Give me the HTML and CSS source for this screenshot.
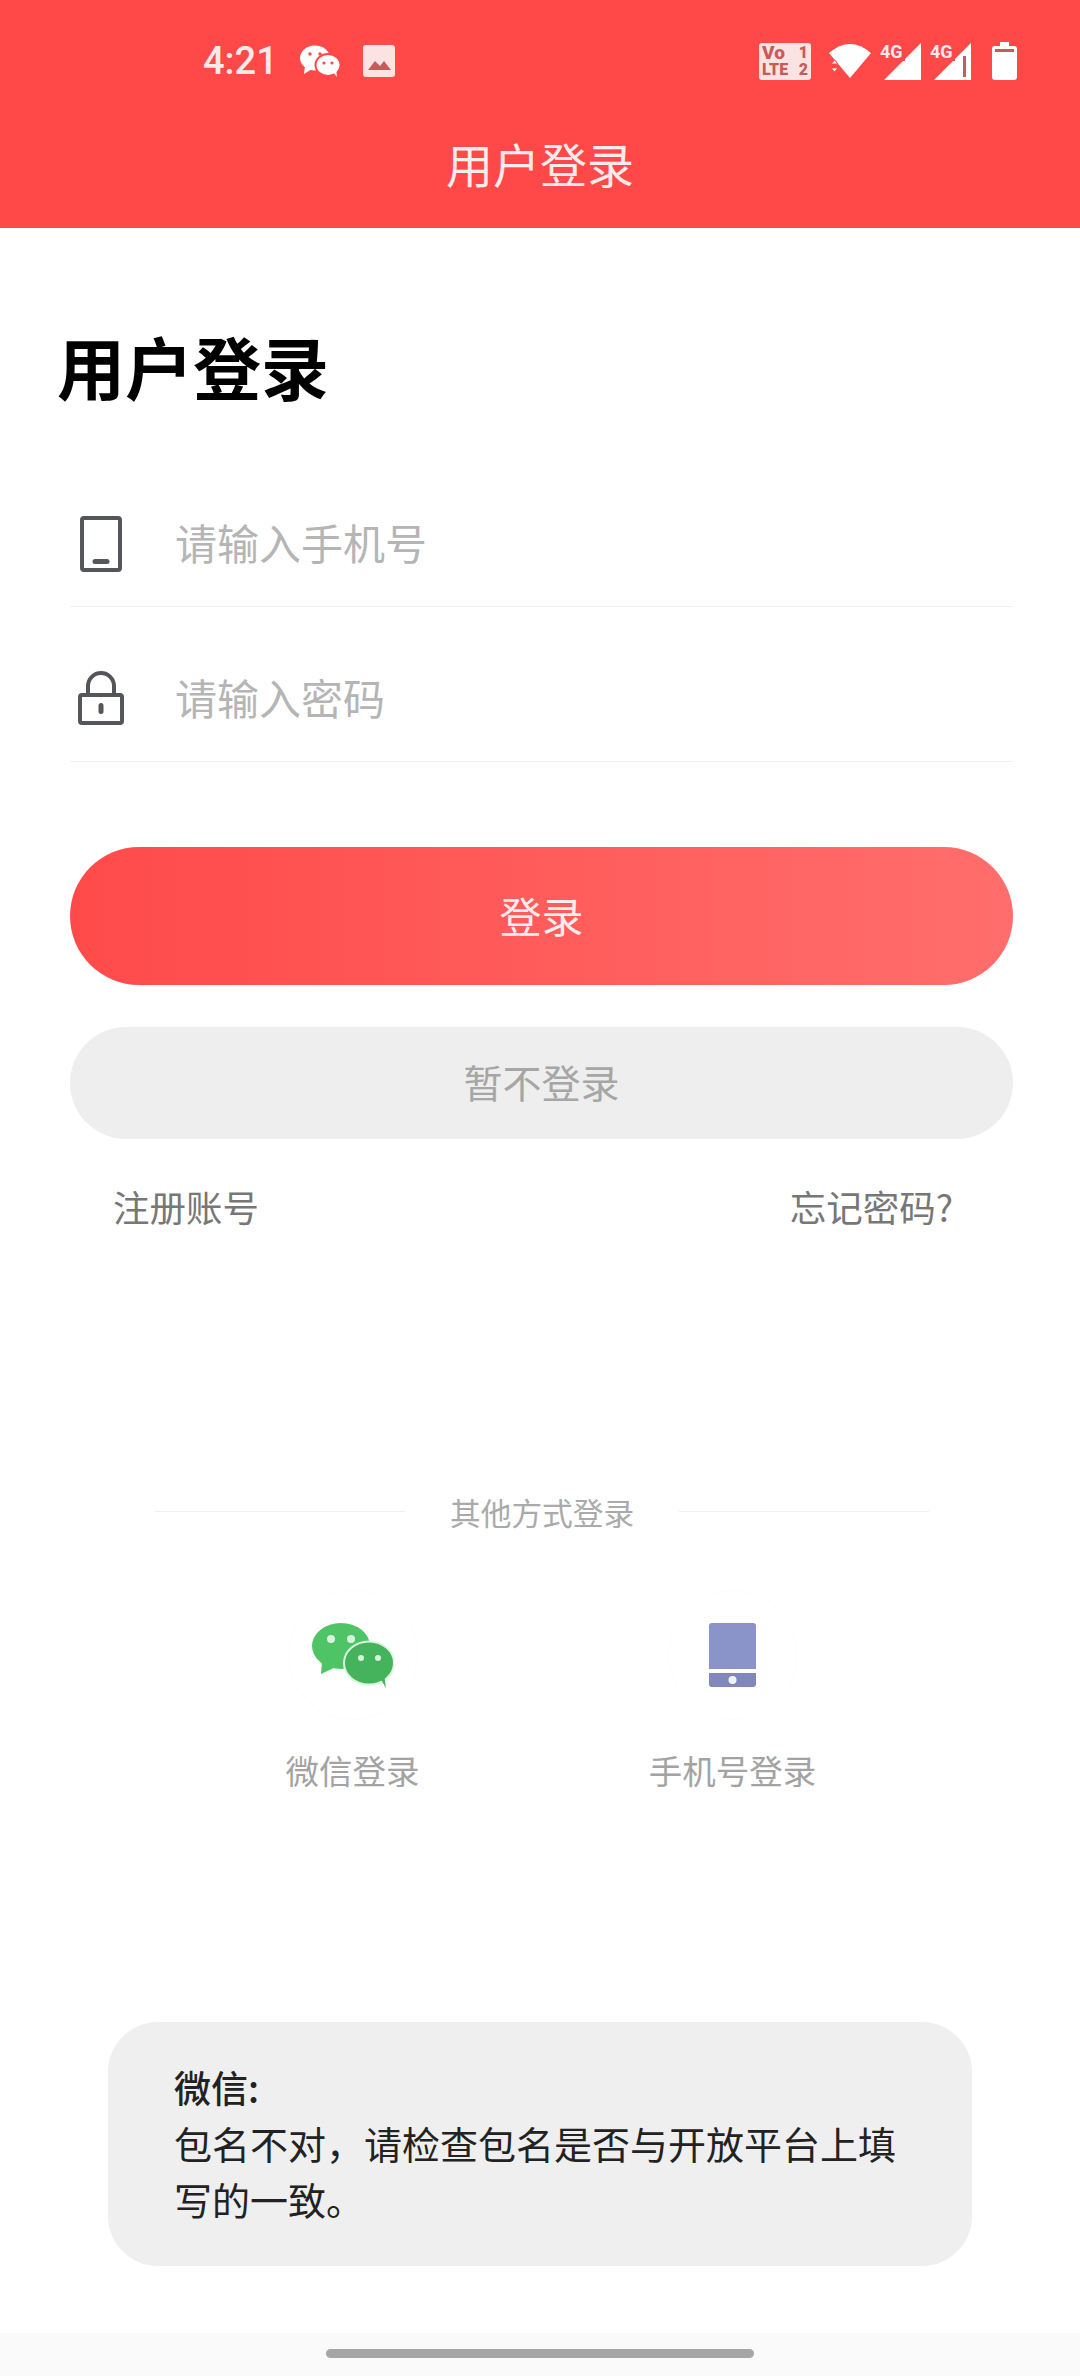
FILE: index.html
```html
<!DOCTYPE html>
<html lang="zh-CN">
<head>
<meta charset="utf-8">
<title>用户登录</title>
<link rel="stylesheet" href="styles.css">
</head>
<body>
<div class="screen">
  <header class="header">
    <div class="status">
      <div class="status-left">
        <span class="time">4:21</span>
        <svg class="ic-wechat" viewBox="0 0 40 32"><ellipse cx="15" cy="13" rx="15" ry="12.5" fill="#fff"/><path d="M5 21l-1 8 8-5z" fill="#fff"/><circle cx="10" cy="9" r="1.7" fill="#ff4848"/><circle cx="20" cy="9" r="1.7" fill="#ff4848"/><ellipse cx="28" cy="20" rx="12.5" ry="11" fill="#fff" stroke="#ff4848" stroke-width="2"/><path d="M33 27l4 5-1-8z" fill="#fff"/><circle cx="24" cy="18" r="1.6" fill="#ff4848"/><circle cx="32" cy="18" r="1.6" fill="#ff4848"/></svg>
        <svg class="ic-image" viewBox="0 0 32 32"><rect width="32" height="32" rx="3" fill="#fbe3e3"/><path d="M5 25l7-9 5 5 4-5 7 9z" fill="#c85a5a"/></svg>
      </div>
      <div class="status-right">
        <div class="volte">
          <span class="volte-vo">Vo</span><span class="volte-num">1</span>
          <span class="volte-lte">LTE</span><span class="volte-num">2</span>
        </div>
        <svg class="ic-wifi" viewBox="0 0 42 34"><path d="M0 9Q21-9 42 9L21 34z" fill="#fff"/><path d="M2 20l3.500-4 3.500 4zM2 24h7l-3.500 4z" fill="#fff" stroke="#ff4848" stroke-width="1"/></svg>
        <div class="sig">
          <svg class="sig-tri" viewBox="0 0 40 37"><path d="M39 0v37H2z" fill="#fff"/></svg>
          <span class="sig-label">4G</span>
        </div>
        <div class="sig sig-second">
          <svg class="sig-tri" viewBox="0 0 40 37"><path d="M39 0v37H2z" fill="#fff"/><path d="M31 13h3v21h-3z" fill="#c85a5a"/></svg>
          <span class="sig-label">4G</span>
        </div>
        <svg class="ic-batt" viewBox="0 0 25 38"><path d="M8 0h9v4h5a3 3 0 0 1 3 3v28a3 3 0 0 1-3 3H3a3 3 0 0 1-3-3V7a3 3 0 0 1 3-3h5z" fill="#fff"/><rect x="3" y="7" width="19" height="3" fill="#c85a5a"/></svg>
      </div>
    </div>
    <h1 class="nav-title">用户登录</h1>
  </header>

  <main class="main">
    <h2 class="page-title">用户登录</h2>
    <div class="field">
      <svg class="field-icon" viewBox="0 0 46 56"><rect x="4" y="2" width="38" height="52" rx="2" fill="none" stroke="#55565a" stroke-width="4"/><rect x="14.500" y="43" width="17" height="5" rx="2.500" fill="#55565a"/></svg>
      <span class="placeholder">请输入手机号</span>
    </div>
    <div class="field">
      <svg class="field-icon" viewBox="0 0 46 56"><path d="M10 24V15a13 13 0 0 1 26 0v9" fill="none" stroke="#55565a" stroke-width="4"/><rect x="2" y="24" width="42" height="28" rx="2" fill="none" stroke="#55565a" stroke-width="4"/><rect x="20.500" y="32" width="5" height="11" rx="2.500" fill="#55565a"/></svg>
      <span class="placeholder">请输入密码</span>
    </div>
    <div class="btn btn-primary">登录</div>
    <div class="btn btn-secondary">暂不登录</div>
    <div class="links">
      <span>注册账号</span>
      <span>忘记密码?</span>
    </div>

    <div class="other">
      <span class="other-line"></span>
      <span class="other-text">其他方式登录</span>
      <span class="other-line"></span>
    </div>

    <div class="social">
      <div class="social-item">
        <div class="social-circle">
          <svg class="ic-wx" viewBox="0 0 82 65">
            <ellipse cx="29" cy="23" rx="29" ry="23" fill="#4fc466"/>
            <path d="M10 38l-1 13 15-7z" fill="#4fc466"/>
            <circle cx="19" cy="16" r="4" fill="#d8f3dd"/><circle cx="39" cy="16" r="4" fill="#d8f3dd"/>
            <ellipse cx="57" cy="40" rx="25" ry="21.500" fill="#45b35c" stroke="#d9f7df" stroke-width="2"/>
            <path d="M68 55l6 10-2-14z" fill="#45b35c"/>
            <circle cx="49" cy="35" r="3" fill="#d8f3dd"/><circle cx="66" cy="35" r="3" fill="#d8f3dd"/>
          </svg>
        </div>
        <span class="social-label">微信登录</span>
      </div>
      <div class="social-item">
        <div class="social-circle">
          <svg class="ic-ph" viewBox="0 0 47 64">
            <path d="M3 0h41a3 3 0 0 1 3 3v43H0V3a3 3 0 0 1 3-3z" fill="#8a94c8"/>
            <path d="M0 50h47v11a3 3 0 0 1-3 3H3a3 3 0 0 1-3-3z" fill="#7f87bb"/>
            <circle cx="23.500" cy="57" r="4" fill="#f2f3fa"/>
          </svg>
        </div>
        <span class="social-label">手机号登录</span>
      </div>
    </div>
  </main>

  <div class="toast">
    <div class="toast-title">微信:</div>
    <div class="toast-body">包名不对&#xFF0C;请检查包名是否与开放平台上填写的一致。</div>
  </div>

  <footer class="gesture"><span class="gesture-bar"></span></footer>
</div>
</body>
</html>
```
FILE: styles.css
```css
* { box-sizing: border-box; }
html, body { margin: 0; padding: 0; background: #fff; }
body { font-family: "Noto Sans CJK SC", "Noto Sans", sans-serif; }
.screen { position: relative; width: 1080px; height: 2376px; display: flex; flex-direction: column; overflow: hidden; background: #fff; }

.header { height: 228px; background: #ff4848; color: #fff; flex: none; }
.status { height: 122px; display: flex; align-items: center; justify-content: space-between; padding: 0 63px 0 203px; }
.status-left, .status-right { display: flex; align-items: center; }
.time { font-family: Roboto, sans-serif; font-weight: 500; font-size: 38px; line-height: 40px; color: #fde9e9; width: 97px; }
.ic-wechat { width: 40px; height: 32px; }
.ic-image { width: 32px; height: 32px; margin-left: 23px; }

.volte { width: 52px; height: 37px; padding: 1px 3px; border-radius: 3px; background: #fbe3e3; color: #c85a5a; font-family: Roboto, sans-serif; font-weight: 900; display: grid; grid-template-columns: 1fr auto; align-items: center; line-height: 17px; }
.volte-vo { font-size: 19px; }
.volte-lte { font-size: 16px; }
.volte-num { font-size: 16px; }

.ic-wifi { width: 42px; height: 34px; margin-left: 18px; }
.sig { position: relative; width: 40px; height: 37px; margin-left: 11px; }
.sig-second { margin-left: 10px; }
.sig-tri { display: block; width: 40px; height: 37px; }
.sig-label { position: absolute; left: -2px; top: -1px; padding-right: 2px; background: #ff4848; color: #fde9e9; font-family: Roboto, sans-serif; font-weight: 700; font-size: 18px; line-height: 19px; }
.ic-batt { width: 25px; height: 38px; margin-left: 20px; }

.nav-title { margin: 11px 0 0; font-weight: 400; font-size: 47px; line-height: 60px; text-align: center; color: #fdeaea; }

.main { padding: 0 67px 0 70px; flex: none; }
.page-title { margin: 93px 0 0 -13px; font-weight: 700; font-size: 68px; line-height: 90px; color: #000; }
.field { display: flex; align-items: center; height: 155px; padding: 57px 0 27px; border-bottom: 1px solid #f0f0f0; }
.page-title + .field { margin-top: 41px; }
.field-icon { width: 46px; height: 56px; margin-left: 8px; flex: none; }
.placeholder { margin: 0 0 4px 51px; font-size: 42px; line-height: 60px; color: #b5b5b5; }

.btn { display: flex; align-items: center; justify-content: center; padding-bottom: 4px; }
.btn-primary { height: 138px; margin-top: 85px; border-radius: 70px; background: linear-gradient(90deg, #ff4a4a, #ff6e6c); color: #fdecec; font-size: 42px; }
.btn-secondary { height: 112px; margin-top: 42px; background: #eeeeee; color: #a6a6a6; font-size: 39px; border-radius: 56px; }
.links { display: flex; justify-content: space-between; margin-top: 43px; padding: 0 60px 0 43px; font-size: 36.500px; line-height: 50px; color: #777; }

.other { display: flex; align-items: center; gap: 45px; margin: 260px 0 0 85px; }
.other-line { width: 250px; height: 1px; background: #efefef; margin-top: -2px; }
.other-text { font-size: 30.700px; line-height: 40px; color: #aaaaaa; white-space: nowrap; }

.social { display: flex; justify-content: center; gap: 180px; margin: 58px 0 0 2px; }
.social-item { width: 200px; display: flex; flex-direction: column; align-items: center; gap: 25px; }
.social-circle { width: 130px; height: 130px; border-radius: 50%; border: 1px solid #fdfdfd; display: flex; align-items: center; justify-content: center; }
.ic-wx { width: 82px; height: 65px; }
.ic-ph { width: 47px; height: 64px; }
.social-label { font-size: 33.500px; line-height: 50px; color: #a3a3a3; white-space: nowrap; }

.toast { position: absolute; left: 108px; top: 2022px; width: 864px; height: 244px; padding: 37px 66px 0; border-radius: 50px; background: #efefef; font-size: 38px; line-height: 56px; color: #222; }
.toast-title { font-weight: 500; font-size: 37px; }

.gesture { margin-top: auto; height: 43px; padding-top: 16px; display: flex; justify-content: center; background: #fafafa; flex: none; }
.gesture-bar { width: 428px; height: 9px; border-radius: 5px; background: #a6a6a6; }
```
